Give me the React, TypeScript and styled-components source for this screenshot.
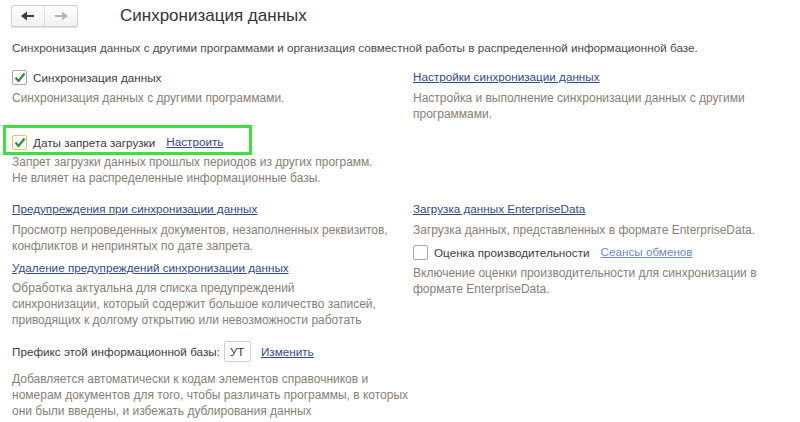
import React from "react";
import styled, { createGlobalStyle } from "styled-components";

const GlobalStyle = createGlobalStyle`
    html, body {
        margin: 0;
        padding: 0;
        background: #fff;
    }
    body {
        font-family: Arial, "Liberation Sans", sans-serif;
        font-size: 11.7px;
        color: #444;
    }
`;

const Page = styled.div`
    width: 800px;
    height: 422px;
    padding: 5px 0 0 12px;
    box-sizing: border-box;
    overflow: hidden;
`;

const Header = styled.div`
    display: flex;
    align-items: center;
    height: 22px;
    margin-left: -1px;
`;

const NavGroup = styled.div`
    display: flex;
    height: 22px;
    border: 1px solid #cfcfcf;
    border-radius: 2px;
    box-sizing: border-box;
    background: linear-gradient(#ffffff, #f1f1f1);
    box-shadow: 0 1px 1px rgba(0, 0, 0, 0.12);
`;

const NavButton = styled.div<{ $last?: boolean }>`
    width: 32px;
    display: flex;
    align-items: center;
    justify-content: center;
    border-left: ${p => (p.$last ? "1px solid #dedede" : "none")};
`;

const Title = styled.h1`
    margin: 0 0 0 42px;
    font-size: 17px;
    font-weight: normal;
    color: #333;
    line-height: 22px;
`;

const Intro = styled.div`
    margin-top: 13px;
    line-height: 16px;
    color: #4a4a4a;
`;

const Grid = styled.div`
    display: grid;
    grid-template-columns: 401px 1fr;
    align-items: start;
`;

const Cell = styled.div<{ $top: number }>`
    margin-top: ${p => p.$top}px;
`;

const Row = styled.div<{ $h?: number }>`
    display: flex;
    align-items: center;
    height: ${p => p.$h ?? 18}px;
    white-space: nowrap;
`;

const Box = styled.span<{ $focus?: boolean }>`
    width: 13px;
    height: 13px;
    border: 1px solid ${p => (p.$focus ? "#e2c25c" : "#a9a9a9")};
    border-radius: 2px;
    background: #fff;
    display: flex;
    align-items: center;
    justify-content: center;
    flex-shrink: 0;
    margin-right: 6px;
`;

const Label = styled.span`
    color: #3c3c3c;
`;

const Link = styled.a<{ $light?: boolean }>`
    color: ${p => (p.$light ? "#6d8bc4" : "#34498a")};
    text-decoration: underline;
    line-height: 16px;
    cursor: pointer;
`;

const InlineLink = styled(Link)`
    margin-left: 11px;
`;

const Note = styled.div<{ $top?: number }>`
    margin-top: ${p => p.$top ?? 0}px;
    font-size: 12px;
    line-height: 16px;
    color: #877e75;
`;

const Highlight = styled.div`
    margin-left: -9px;
    width: 249px;
    box-sizing: border-box;
    border: 3px solid #3ee03e;
    padding: 5px 0 1px 6px;
    margin-bottom: -1px;
`;

const PrefixInput = styled.div`
    width: 27px;
    height: 21px;
    box-sizing: border-box;
    border: 1px solid #cfcfcf;
    border-radius: 2px;
    margin: 0 10px 0 4px;
    padding-left: 5px;
    line-height: 19px;
    color: #333;
`;

const Check = () => (
    <svg width="12" height="11" viewBox="0 0 12 11">
        <polyline points="1.5,5.5 4.5,9 10.5,1.5" fill="none" stroke="#2f8f3f" strokeWidth="2.2" strokeLinejoin="round" />
    </svg>
);

const Arrow = ({ dir, color }: { dir: "left" | "right"; color: string }) => (
    <svg width="14" height="10" viewBox="0 0 14 10" style={{ transform: dir === "right" ? "scaleX(-1)" : undefined }}>
        <line x1="4" y1="5" x2="13" y2="5" stroke={color} strokeWidth="2" />
        <polygon points="0,5 6,0.5 6,9.5" fill={color} />
    </svg>
);

const Checkbox = ({ checked, focus }: { checked?: boolean; focus?: boolean }) => (
    <Box $focus={focus}>{checked && <Check />}</Box>
);

export default function App() {
    return (
        <Page>
            <GlobalStyle />
            <Header>
                <NavGroup>
                    <NavButton><Arrow dir="left" color="#3a3a3a" /></NavButton>
                    <NavButton $last><Arrow dir="right" color="#b4b4b4" /></NavButton>
                </NavGroup>
                <Title>Синхронизация данных</Title>
            </Header>
            <Intro>
                Синхронизация данных с другими программами и организация совместной работы в распределенной информационной базе.
            </Intro>
            <Grid>
                <Cell $top={12}>
                    <Row>
                        <Checkbox checked />
                        <Label>Синхронизация данных</Label>
                    </Row>
                    <Note $top={4}>Синхронизация данных с другими программами.</Note>
                </Cell>
                <Cell $top={12}>
                    <Row>
                        <Link>Настройки синхронизации данных</Link>
                    </Row>
                    <Note $top={4}>
                        Настройка и выполнение синхронизации данных с другими
                        <br />
                        программами.
                    </Note>
                </Cell>

                <Cell $top={3}>
                    <Highlight>
                        <Row>
                            <Checkbox checked focus />
                            <Label>Даты запрета загрузки</Label>
                            <InlineLink>Настроить</InlineLink>
                        </Row>
                    </Highlight>
                    <Note>
                        Запрет загрузки данных прошлых периодов из других программ.
                        <br />
                        Не влияет на распределенные информационные базы.
                    </Note>
                </Cell>
                <div />

                <Cell $top={15}>
                    <Link>Предупреждения при синхронизации данных</Link>
                    <Note $top={5}>
                        Просмотр непроведенных документов, незаполненных реквизитов,
                        <br />
                        конфликтов и непринятых по дате запрета.
                    </Note>
                    <Cell $top={6}>
                        <Link>Удаление предупреждений синхронизации данных</Link>
                    </Cell>
                    <Note $top={4}>
                        Обработка актуальна для списка предупреждений
                        <br />
                        синхронизации, который содержит большое количество записей,
                        <br />
                        приводящих к долгому открытию или невозможности работать
                    </Note>
                    <Cell $top={13}>
                        <Row $h={21}>
                            <Label>Префикс этой информационной базы:</Label>
                            <PrefixInput>УТ</PrefixInput>
                            <Link>Изменить</Link>
                        </Row>
                    </Cell>
                    <Note $top={9}>
                        Добавляется автоматически к кодам элементов справочников и
                        <br />
                        номерам документов для того, чтобы различать программы, в которых
                        <br />
                        они были введены, и избежать дублирования данных
                    </Note>
                </Cell>
                <Cell $top={15}>
                    <Link>Загрузка данных EnterpriseData</Link>
                    <Note $top={5}>Загрузка данных, представленных в формате EnterpriseData.</Note>
                    <Cell $top={5}>
                        <Row>
                            <Checkbox />
                            <Label>Оценка производительности</Label>
                            <InlineLink $light>Сеансы обменов</InlineLink>
                        </Row>
                    </Cell>
                    <Note $top={4}>
                        Включение оценки производительности для синхронизации в
                        <br />
                        формате EnterpriseData.
                    </Note>
                </Cell>
            </Grid>
        </Page>
    );
}
